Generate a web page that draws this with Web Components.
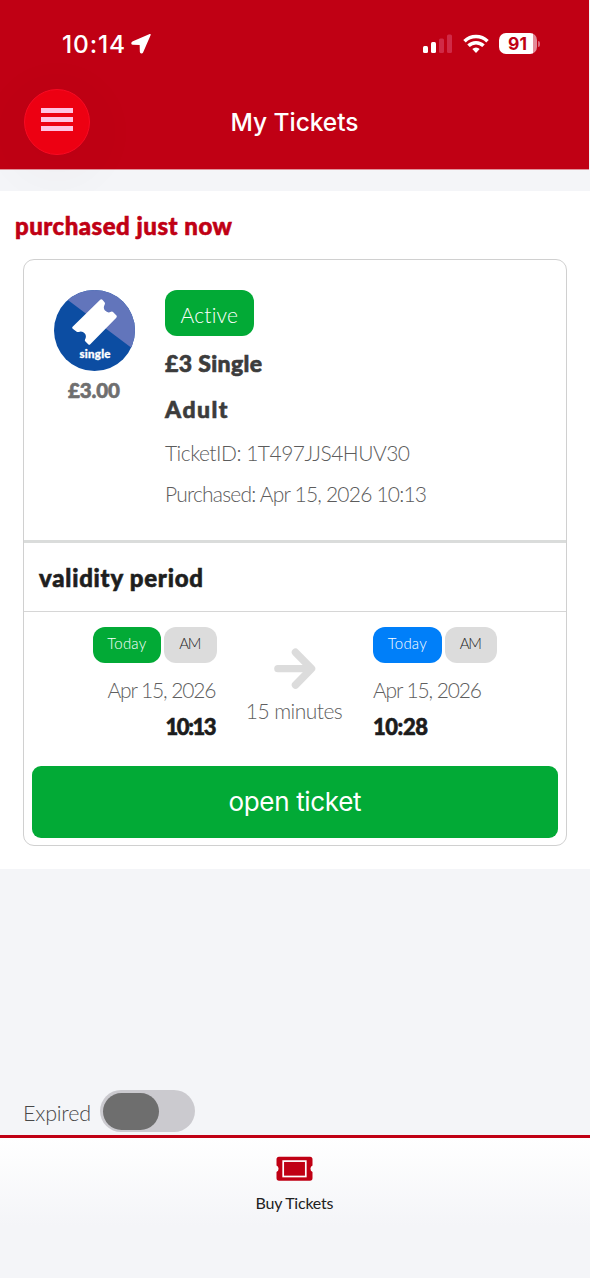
<!DOCTYPE html>
<html lang="en">
<head>
<meta charset="utf-8">
<title>My Tickets</title>
<style>
html,body{margin:0;height:100%;background:#f4f5f8}
body{font-family:Lato,"Noto Sans",sans-serif;color:#222}
</style>
</head>
<body>
<tickets-app></tickets-app>
<script>
const define = (name, html, setup) => {
  const t = document.createElement('template');
  t.innerHTML = html;
  customElements.define(name, class extends HTMLElement {
    connectedCallback() {
      if (this.shadowRoot) return;
      this.attachShadow({mode:'open'}).append(t.content.cloneNode(true));
      if (setup) setup(this, this.shadowRoot);
    }
  });
};

/* One line of text; "fit" tracks the letters so the line has that width. */
define('text-line', `
<style>:host{display:block;white-space:nowrap}span{display:inline-block;line-height:inherit}
:host([heavy]){-webkit-text-stroke:.6px currentColor}</style>
<span><slot></slot></span>`, (host, root) => {
  const w = +host.getAttribute('fit');
  if (!w) return;
  const n = host.textContent.length, s = root.querySelector('span');
  const ls = (w - s.getBoundingClientRect().width) / (n - 1);
  s.style.letterSpacing = ls + 'px';
  s.style.marginRight = -ls + 'px';
});

define('status-bar', `
<style>
:host{display:flex;justify-content:space-between;height:64px;padding:0 49px 0 62px;color:#fff;font-family:Inter,sans-serif}
.l,.r{display:flex;align-items:flex-start}
text-line{font-size:24.5px;font-weight:500;line-height:30px;margin-top:29px}
.l svg{margin:33px 0 0 6px}
.r svg{margin-top:33px}
.batt{display:flex;margin:33px 0 0 10px;align-items:center}
.cell{width:38px;height:21px;border-radius:7px;background:linear-gradient(90deg,#fff 34.5px,#e38b99 34.5px);display:flex;align-items:center;justify-content:center;color:#c00014}
.cell text-line{font-size:17.5px;font-weight:700;line-height:21px;margin:0 1px 0 0}
.nub{width:2px;height:6px;background:#d9667a;border-radius:0 3px 3px 0;margin-left:1px}
</style>
<div class="l"><text-line fit="63">10:14</text-line>
<svg width="21" height="21" viewBox="0 0 21 21"><path d="M19 1.7 1.6 9.300c-1 .5-.7 1.7.3 1.8l7.500.2.2 7.600c.1 1 1.400 1.100 1.800.2Z" fill="#fff" stroke="#fff" stroke-width="1.500" stroke-linejoin="round"/></svg></div>
<div class="r">
<svg width="30" height="21" viewBox="0 0 30 21"><rect x="0" y="13" width="5" height="7" rx="1.500" fill="#fff"/><rect x="8" y="9" width="5" height="11" rx="1.500" fill="#fff"/><rect x="16" y="5.500" width="5" height="14.500" rx="1.500" fill="#d02a46"/><rect x="24" y="1.500" width="5" height="18.500" rx="1.500" fill="#d02a46"/></svg>
<svg style="margin-left:10px" width="26" height="21" viewBox="0 0 26 21" fill="none" stroke="#fff" stroke-width="3.500"><path d="M1.500 8.300a16.400 16.400 0 0 1 23 0"/><path d="M5.500 12.800a10.600 10.600 0 0 1 15 0"/><path d="M9.300 16a5.200 5.200 0 0 1 7.400 0L13 20Z" fill="#fff" stroke="none"/></svg>
<div class="batt"><div class="cell"><text-line fit="19">91</text-line></div><div class="nub"></div></div>
</div>`);

define('menu-button', `
<style>
:host{display:flex;width:66px;height:66px;box-sizing:border-box;border-radius:50%;background:#ed0012;border:1.500px solid #f90a23;flex-direction:column;align-items:center;gap:4px;padding-top:18px;box-shadow:0 10px 40px 20px rgba(70,0,25,.022)}
i{width:32px;height:5px;background:#ffc3e2}
</style><i></i><i></i><i></i>`);

define('app-header', `
<style>
:host{display:block;height:170px;margin-right:1px;background:#c00014;border-bottom:1px solid #e0929b;box-sizing:border-box}
.bar{display:grid;grid-template-columns:66px 1fr 66px;padding:24.600px 24px 0;justify-items:center}
text-line{color:#fff;font:500 24.5px/30px Inter,sans-serif;margin-top:18px}
</style>
<status-bar></status-bar>
<div class="bar"><menu-button></menu-button><text-line fit="128">My Tickets</text-line></div>`);

define('ticket-badge', `
<style>:host{display:block;width:82px;height:82px;position:relative}svg{display:block}
text-line{position:absolute;left:0;right:0;top:57px;text-align:center;color:#fff;font:900 11.500px/14px Lato,sans-serif;-webkit-text-stroke:.3px #fff}</style>
<svg width="82" height="82" viewBox="0 0 82 82"><defs><clipPath id="c"><circle cx="40.500" cy="40.500" r="40.500"/></clipPath></defs>
<g clip-path="url(#c)"><rect width="82" height="82" fill="#0c4da2"/><path d="M0 0H82V62L77 57.500 14.500 10.500Z" fill="#6275bb"/></g>
<path d="M46.200 9.700Q47.300 8.600 48.400 9.800L50.700 12.600Q51.300 13.400 50.700 14.500 48.800 18 51 20.600 53.800 23.500 57 21.700 58.200 21.100 59 21.900L62.500 25.600Q63.300 26.700 62.300 27.800L36.300 54.200Q35.300 55.200 34.200 54.200L31.200 51.300Q30.500 50.500 31 49.500 32.900 46 30.800 43.400 28.300 40.600 24.700 41.900 23.500 42.400 22.700 41.700L18.700 38.800Q17.600 37.800 18.600 36.700Z" fill="#fff"/></svg>
<text-line fit="31">single</text-line>`);

define('pill-tag', `
<style>
:host{display:flex;box-sizing:border-box;justify-content:center;border-radius:12px;background:#dcdcdc;color:#222;height:36px;font-size:15px;line-height:32px;font-weight:300}
:host([tone=green]){background:#02aa36;color:#fff}
:host([tone=blue]){background:#007ff9;color:#fff}
:host([large]){height:46px;width:88.500px;font-size:21px;line-height:49px}
</style><slot></slot>`);

define('ticket-summary', `
<style>
:host{display:flex;height:280px;box-sizing:border-box;padding:30px 0 0 30px;gap:29px}
.left{width:82px;display:flex;flex-direction:column;align-items:center}
.left>text-line{font:900 20.500px/24px Lato,sans-serif;color:#6f6f6f;margin:6px 2px 0 0}
.right{display:flex;flex-direction:column;align-items:flex-start;color:#5c5c5c}
.b{font:900 23px/30px Lato,sans-serif;color:#3c3c3c}
.t{font-size:21px;line-height:26px;font-weight:300}
</style>
<div class="left"><ticket-badge></ticket-badge><text-line heavy fit="52">£3.00</text-line></div>
<div class="right">
<pill-tag large tone="green"><text-line fit="58">Active</text-line></pill-tag>
<text-line heavy class="b" fit="97" style="margin-top:12px">£3 Single</text-line>
<text-line heavy class="b" fit="62.500" style="margin-top:15.500px">Adult</text-line>
<text-line class="t" fit="245" style="margin-top:16.500px">TicketID: 1T497JJS4HUV30</text-line>
<text-line class="t" fit="262" style="margin-top:15px">Purchased: Apr 15, 2026 10:13</text-line>
</div>`);

define('time-point', `
<style>
:host{display:flex;flex-direction:column;align-items:flex-start;color:#606060}
:host([end]){align-items:flex-end}
.tags{display:flex;gap:3px}
.tags ::slotted(*){flex:none}
.d{font-size:21px;line-height:26px;font-weight:300;margin-top:14px}
.h{font:900 22px/28px Lato,sans-serif;color:#1c1c1c;margin-top:10px}
</style>
<div class="tags"><slot name="tags"></slot></div>
<text-line class="d" fit="109">Apr 15, 2026</text-line>
<div class="h"><slot></slot></div>`);

define('validity-row', `
<style>
:host{display:grid;grid-template-columns:192.500px 156.500px 1fr;padding-top:15px;height:154px;box-sizing:border-box}
.mid{display:flex;flex-direction:column;align-items:center;padding:21px 0 0;color:#606060}
.mid text-line{font-size:21px;line-height:26px;font-weight:300;margin:8px 1px 0 0}
svg{display:block}
</style>
<time-point end><pill-tag slot="tags" tone="green" style="width:68.500px"><text-line fit="39">Today</text-line></pill-tag><pill-tag slot="tags" style="width:52.500px"><text-line fit="22">AM</text-line></pill-tag><text-line heavy fit="51">10:13</text-line></time-point>
<div class="mid"><svg width="44" height="42" viewBox="0 0 44 42" fill="none" stroke="#dcdcdc" stroke-width="7.500" stroke-linecap="round" stroke-linejoin="round"><path d="M22.500 4.300 38.500 20.700 22.500 37"/><path d="M4.800 20.700H37" stroke-width="7.200"/></svg><text-line fit="97">15 minutes</text-line></div>
<time-point><pill-tag slot="tags" tone="blue" style="width:68.500px"><text-line fit="39">Today</text-line></pill-tag><pill-tag slot="tags" style="width:52.500px"><text-line fit="22">AM</text-line></pill-tag><text-line heavy fit="55">10:28</text-line></time-point>`);

define('ticket-card', `
<style>
:host{display:block;box-sizing:border-box;width:544px;height:587px;margin:18px 0 0 23px;border:1.500px solid #d0d0d0;border-radius:11px}
.head{border-top:3px solid #dadcdb;border-bottom:1.500px solid #d6d6d6;height:68px;padding-left:15px}
.head text-line{font:900 24px/30px Lato,sans-serif;color:#1e1e1e;padding-top:20px}
button{display:flex;justify-content:center;width:526px;height:72px;margin:0 auto;padding:0;border:0;border-radius:9px;background:#02aa36;color:#fff;font:400 26px/72px Inter,sans-serif}
</style>
<ticket-summary></ticket-summary>
<div class="head"><text-line heavy fit="164">validity period</text-line></div>
<validity-row></validity-row>
<button><text-line fit="133">open ticket</text-line></button>`);

define('ticket-group', `
<style>
:host{display:block;background:#fff;height:678px;margin-top:21px;box-sizing:border-box}
.title{display:block;font:900 24px/30px Lato,sans-serif;color:#c00014;padding:20px 0 0 15px}
</style>
<text-line heavy class="title" fit="217">purchased just now</text-line>
<ticket-card></ticket-card>`);

define('expired-toggle', `
<style>
:host{display:flex;align-items:center;height:42px;padding-left:23px;margin-top:auto;margin-bottom:3px;gap:8.500px}
text-line{font-size:21.500px;line-height:28px;font-weight:300;color:#484848;padding-top:4px;width:68.500px}
.track{width:95px;height:42px;border-radius:21px;background:#cbcacf;box-sizing:border-box;padding:2.500px 3px}
.knob{width:56px;height:37px;border-radius:18.500px;background:#6e6e6e}
</style>
<text-line fit="68">Expired</text-line><div class="track"><div class="knob"></div></div>`);

define('bottom-nav', `
<style>
:host{display:flex;flex-direction:column;align-items:center;height:143px;box-sizing:border-box;border-top:3px solid #c00014;background:linear-gradient(#fff,#f4f5f8 88px);padding:18px 1px 0 0}
svg{display:block}
text-line{font:400 16px/20px Lato,sans-serif;color:#222;margin-top:11.400px}
</style>
<svg width="37" height="26" viewBox="0 0 37 26"><path d="M3 .8H34Q36.500.8 36.500 3.300V9.500A3.600 3.600 0 0 0 36.500 16V22Q36.500 24.700 34 24.700H3Q.5 24.700.5 22V16A3.600 3.600 0 0 0 .5 9.500V3.300Q.5.8 3 .8Z" fill="#c00014"/><rect x="7.200" y="5.100" width="22.600" height="15.400" fill="none" stroke="#fff" stroke-width="1.700"/></svg>
<text-line fit="78">Buy Tickets</text-line>`);

define('tickets-app', `
<style>:host{display:flex;flex-direction:column;width:590px;height:1278px;overflow:hidden;background:#f4f5f8}
app-header,ticket-group,expired-toggle,bottom-nav{flex:none}</style>
<app-header></app-header><ticket-group></ticket-group><expired-toggle></expired-toggle><bottom-nav></bottom-nav>`);
</script>
</body>
</html>
